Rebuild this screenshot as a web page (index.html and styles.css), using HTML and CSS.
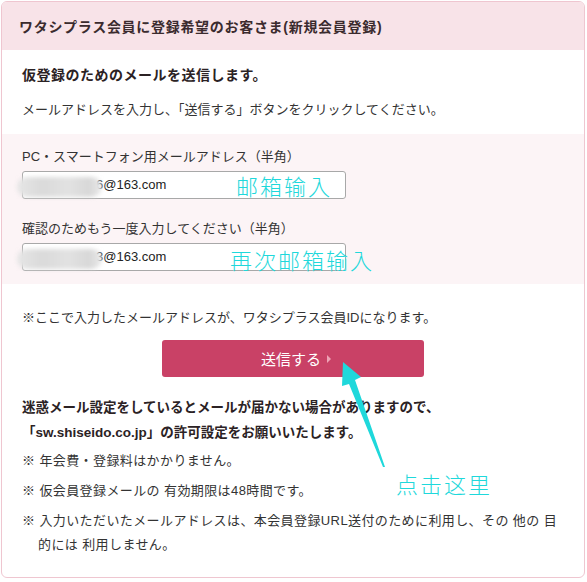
FILE: index.html
```html
<!DOCTYPE html>
<html lang="ja">
<head>
    <meta charset="UTF-8">
    <meta name="viewport" content="width=device-width, initial-scale=1.0">
    <title>新規会員登録</title>
    <link rel="stylesheet" href="styles.css">
</head>
<body>

    <!-- 登録パネル -->
    <div class="panel">
        <div class="panel-head">
            <h2>ワタシプラス会員に登録希望のお客さま(新規会員登録)</h2>
        </div>

        <div class="intro">
            <p class="lead">仮登録のためのメールを送信します。</p>
            <p>メールアドレスを入力し、「送信する」ボタンをクリックしてください。</p>
        </div>

        <!-- 入力フォーム -->
        <div class="form-area">
            <div class="field">
                <label>PC・スマートフォン用メールアドレス（半角）</label>
                <div class="input"><span class="mask"></span>6@163.com</div>
            </div>
            <div class="field">
                <label>確認のためもう一度入力してください（半角）</label>
                <div class="input"><span class="mask"></span>3@163.com</div>
            </div>
        </div>

        <p class="note">※ここで入力したメールアドレスが、ワタシプラス会員IDになります。</p>

        <div class="actions">
            <button class="send-btn">送信する<span class="tri"></span></button>
        </div>

        <p class="warn">迷惑メール設定をしているとメールが届かない場合がありますので、<br>「sw.shiseido.co.jp」の許可設定をお願いいたします。</p>

        <ul class="notes">
            <li>※ 年会費・登録料はかかりません。</li>
            <li>※ 仮会員登録メールの 有効期限は48時間です。</li>
            <li>※ 入力いただいたメールアドレスは、本会員登録URL送付のために利用し、その 他の 目的には 利用しません。</li>
        </ul>
    </div>

    <!-- 注釈 -->
    <div class="tag tag-1">邮箱输入</div>
    <div class="tag tag-2">再次邮箱输入</div>
    <div class="tag tag-3">点击这里</div>
    <svg class="arrow" width="587" height="582" viewBox="0 0 587 582">
        <polygon points="343,362 361,377 355,380 385,467 383,467 349,384 342,386" fill="#1fd8db"/>
    </svg>

</body>
</html>
```

FILE: styles.css
```css
/* 全体 */
body {
    margin: 0;
    padding: 0;
    font-family: "Liberation Sans", "Noto Sans CJK JP", sans-serif;
    font-size: 13px;
    color: #333;
    background-color: #fff;
}

p {
    margin: 0;
}

.panel {
    box-sizing: border-box;
    width: 584px;
    height: 577px;
    margin: 1px 0 0 1px;
    border: 1px solid #efc6d0;
    border-radius: 6px;
    overflow: hidden;
}

/* ヘッダー */
.panel-head {
    height: 48px;
    display: flex;
    align-items: center;
    padding-left: 17px;
    background-color: #f8e3e8;
}

.panel-head h2 {
    margin: 0;
    font-size: 14px;
    letter-spacing: 0.7px;
    color: #3b2b2e;
}

.intro {
    padding: 15px 20px 14px;
}

.intro p {
    line-height: 20px;
}

.intro .lead {
    font-size: 14px;
    font-weight: bold;
    letter-spacing: 0.5px;
    color: #2b2224;
    margin-bottom: 15px;
}

/* フォーム */
.form-area {
    background-color: #fcf4f6;
    padding: 13px 20px 13px;
}

.field label {
    display: block;
    line-height: 20px;
}

.field + .field {
    margin-top: 20px;
}

.input {
    position: relative;
    box-sizing: border-box;
    width: 324px;
    height: 28px;
    margin-top: 4px;
    border: 1px solid #a8a8a8;
    border-radius: 3px;
    background-color: #fff;
    padding-left: 73px;
    line-height: 26px;
    font-size: 13px;
    color: #222;
}

.mask {
    position: absolute;
    left: -6px;
    top: 5px;
    width: 85px;
    height: 20px;
    border-radius: 10px;
    background: linear-gradient(90deg, #e6e6e6, #dadada 30%, #e2e2e2 60%, #d8d8d8 85%, #eaeaea);
    filter: blur(2px);
}

.note {
    margin: 24px 20px 0;
    line-height: 20px;
}

/* 送信ボタン */
.actions {
    display: flex;
    justify-content: center;
    margin-top: 12px;
}

.send-btn {
    width: 262px;
    height: 37px;
    border: none;
    border-radius: 3px;
    background-color: #c94166;
    color: #fff;
    font-family: "Noto Sans CJK JP", sans-serif;
    font-size: 15px;
    display: flex;
    align-items: center;
    justify-content: center;
    padding-left: 12px;
}

.tri {
    width: 0;
    height: 0;
    margin-left: 6px;
    border-left: 4px solid #eea3b6;
    border-top: 4px solid transparent;
    border-bottom: 4px solid transparent;
}

.warn {
    margin: 18px 20px 0;
    font-size: 13.5px;
    font-weight: bold;
    line-height: 25px;
    color: #2b2224;
}

.notes {
    list-style: none;
    margin: 4px 20px 0;
    padding: 0;
}

.notes li {
    line-height: 24px;
    letter-spacing: 0.4px;
    padding-left: 16px;
    text-indent: -16px;
    margin-bottom: 6px;
}

/* 注釈 */
.tag {
    position: absolute;
    font-family: "Noto Sans CJK SC", sans-serif;
    font-weight: 300;
    font-size: 22px;
    letter-spacing: 2px;
    color: #1fd8db;
    line-height: 28px;
}

.tag-1 {
    left: 236px;
    top: 171px;
}

.tag-2 {
    left: 230px;
    top: 245px;
}

.tag-3 {
    left: 396px;
    top: 469px;
}

.arrow {
    position: absolute;
    left: 0;
    top: 0;
    pointer-events: none;
}
```
